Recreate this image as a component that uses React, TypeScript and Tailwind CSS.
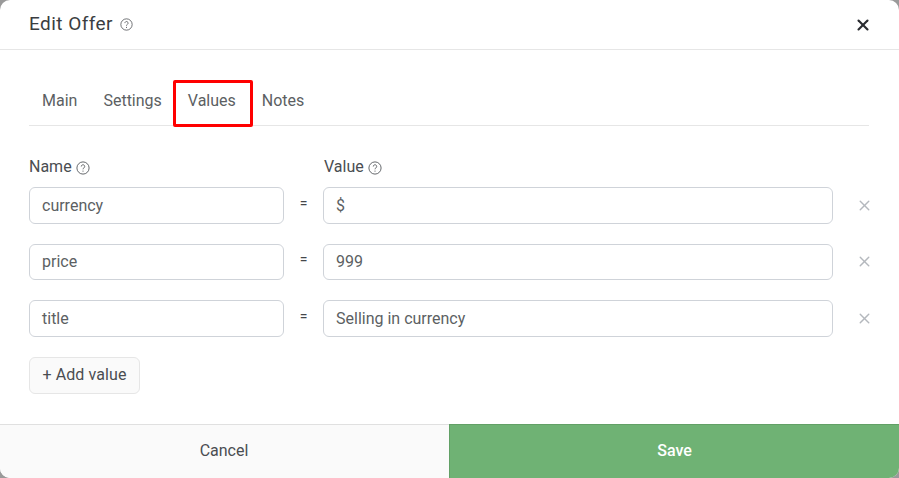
import { X } from 'lucide-react';

const rows = [
  { name: 'currency', value: '$' },
  { name: 'price', value: '999' },
  { name: 'title', value: 'Selling in currency' },
];

function HelpIcon({ className }: { className?: string }) {
  return (
    <svg viewBox="0 0 14 14" fill="none" stroke="currentColor" className={className}>
      <circle cx="7" cy="7" r="6.1" strokeWidth="0.9" />
      <path d="M5.3 5.5a1.7 1.7 0 1 1 2.6 1.4c-.6.4-.9.7-.9 1.4" strokeWidth="0.9" />
      <circle cx="7" cy="10.1" r="0.55" fill="currentColor" stroke="none" />
    </svg>
  );
}

export default function App() {
  return (
    <div className="h-[478px] w-[899px] overflow-hidden bg-[#9a9a9a] font-['Roboto',sans-serif]">
      <div className="flex h-full flex-col overflow-hidden rounded-[10px] bg-white">
        {/* Header */}
        <div className="flex h-[50px] shrink-0 items-center justify-between border-b border-[#e6e6e6] pl-[29px] pr-[27px]">
          <div className="flex items-center gap-[7px]">
            <h1 className="pb-[2px] text-[19px] leading-none tracking-[0.45px] text-[#3a3d41]">Edit Offer</h1>
            <HelpIcon className="mb-[1px] h-[13px] w-[13px] text-[#55585c]" />
          </div>
          <X className="h-[18px] w-[18px] text-[#2a2c30]" strokeWidth={2.8} />
        </div>

        {/* Body */}
        <div className="flex-1 pl-[29px] pr-[30px] pt-[30px]">
          <nav className="relative flex h-[46px] border-b border-[#e6e6e6] text-[16px] leading-[42px] text-[#5c5f63]">
            <span className="px-[13px]">Main</span>
            <span className="px-[13px]">Settings</span>
            <span className="px-[13px]">Values</span>
            <span className="px-[13px]">Notes</span>
            <span className="absolute left-[144px] top-0 h-[47px] w-[80px] rounded-[2px] border-[3px] border-[#ff0000]" />
          </nav>

          <div className="mt-[31px] flex h-[20px] items-center text-[16px] text-[#4a4d51]">
            <span className="flex w-[295px] items-center gap-[4px]">
              Name <HelpIcon className="mt-[2px] h-[14px] w-[14px] text-[#55585c]" />
            </span>
            <span className="flex items-center gap-[4px]">
              Value <HelpIcon className="mt-[2px] h-[14px] w-[14px] text-[#55585c]" />
            </span>
          </div>

          <div className="mt-[10px] flex flex-col gap-[20px]">
            {rows.map((row) => (
              <div key={row.name} className="flex h-[36.5px] items-center text-[16px] text-[#5c5f63]">
                <div className="flex h-full w-[255px] shrink-0 items-center rounded-[6px] border border-[#cfd3d9] px-[12px] pt-[1px]">
                  {row.name}
                </div>
                <span className="w-[39px] shrink-0 pb-[4px] text-center text-[14px] text-[#44474b]">=</span>
                <div className="flex h-full w-[510px] shrink-0 items-center rounded-[6px] border border-[#cfd3d9] px-[12px] pt-[1px]">
                  {row.value}
                </div>
                <X className="ml-[23px] h-[17px] w-[17px] shrink-0 text-[#b4b8bd]" strokeWidth={2} />
              </div>
            ))}
          </div>

          <button className="mt-[20px] flex h-[37px] w-[111px] items-center justify-center rounded-[6px] border border-[#e6e6e6] bg-[#fafafa] text-[16px] tracking-[0.1px] text-[#4a4d51]">
            + Add value
          </button>
        </div>

        {/* Footer */}
        <div className="flex h-[54px] shrink-0 text-[16px]">
          <button className="flex-1 border-t border-[#e0e0e0] bg-[#fafafa] pb-[2px] pr-[1px] text-[#4a4d51]">Cancel</button>
          <button className="w-[450px] border-l border-t border-[#62a066] bg-[#6fb274] pb-[2px] font-medium text-white">Save</button>
        </div>
      </div>
    </div>
  );
}
